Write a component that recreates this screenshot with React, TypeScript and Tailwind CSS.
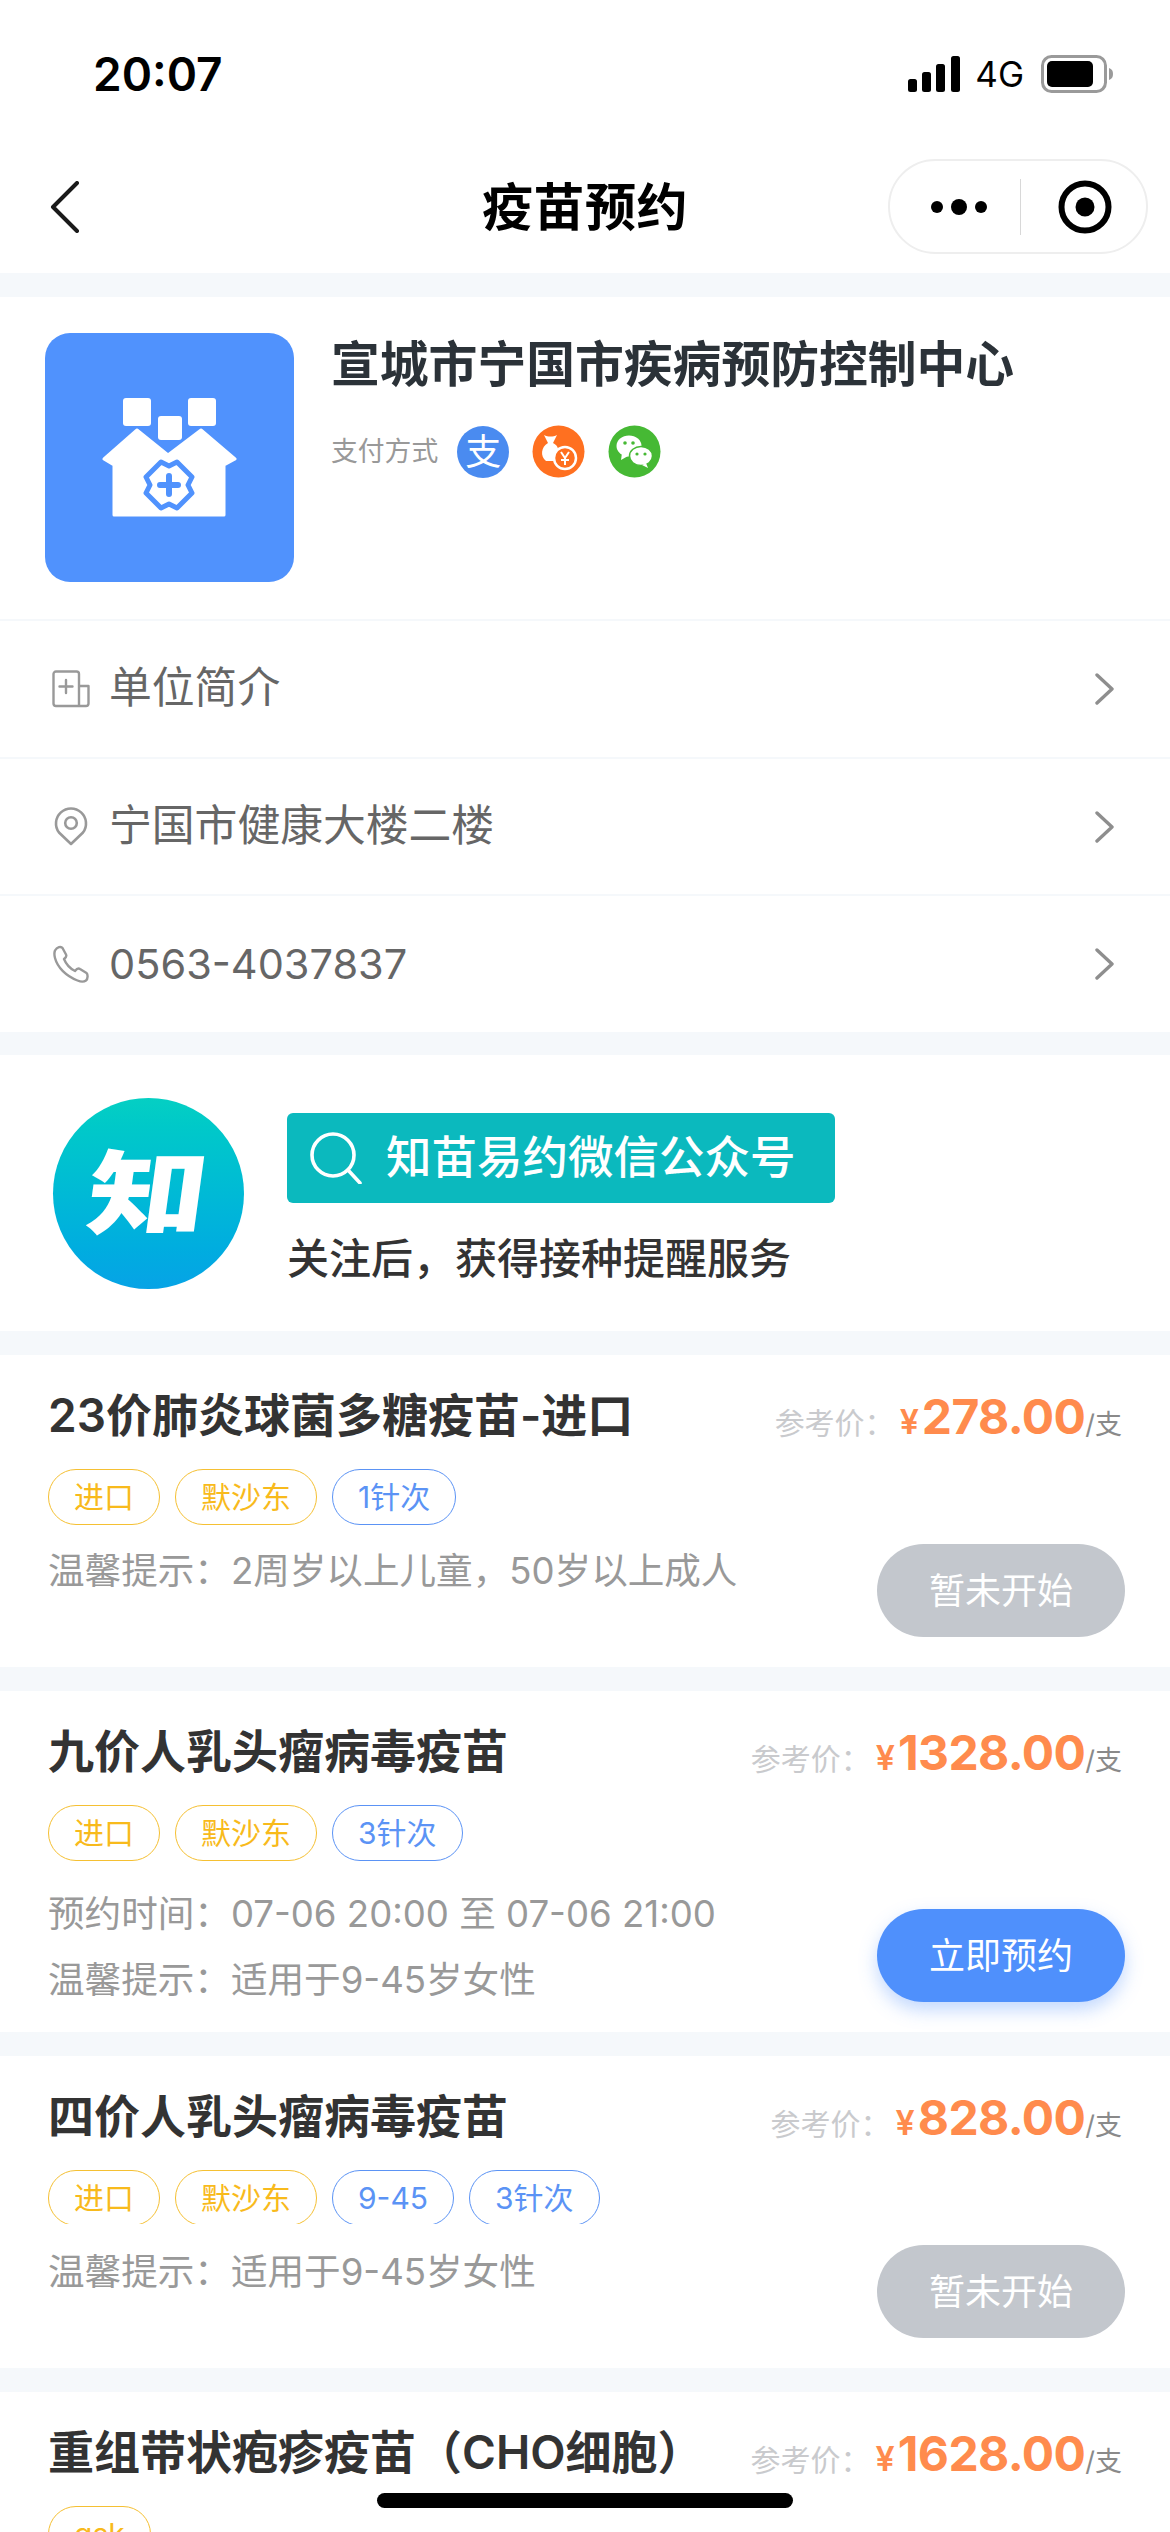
import React from "react";

const font = "font-['Inter','Noto_Sans_CJK_SC',sans-serif]";

function Chevron() {
  return (
    <svg width="22" height="32" viewBox="0 0 22 32" fill="none" className="shrink-0">
      <path d="M3 2l15 14L3 30" stroke="#8e8e8e" strokeWidth="3.4" strokeLinecap="round" strokeLinejoin="round" />
    </svg>
  );
}

function Row({ icon, children }: { icon: React.ReactNode; children: React.ReactNode }) {
  return (
    <div className="flex h-[137.7px] items-center border-t-2 border-[#f5f8fb] pl-[52px] pr-[54px]">
      <div className="flex w-[57px] shrink-0 items-center">{icon}</div>
      <div className="flex-1 text-[42.8px] leading-none text-[#666666]">{children}</div>
      <Chevron />
    </div>
  );
}

function Tag({ children, blue }: { children: React.ReactNode; blue?: boolean }) {
  return (
    <div
      className={`flex h-[56px] shrink-0 items-center rounded-[28px] border px-[25px] text-[30px] leading-none ${
        blue ? "border-[#5b93f5] text-[#5b93f5]" : "border-[#f5c033] text-[#f8ba1c]"
      }`}
    >
      {children}
    </div>
  );
}

function Price({ value }: { value: string }) {
  return (
    <div className="flex items-baseline">
      <span className="text-[30px] leading-none text-[#c9cacd]">参考价：</span>
      <span className="ml-[5px] text-[34px] font-semibold leading-none text-[#ff8b4d]">¥</span>
      <span className="ml-[3px] text-[48px] font-bold leading-none tracking-[-0.6px] text-[#ff8b4d]">{value}</span>
      <span className="text-[27px] leading-none text-[#8a8a8a]">/支</span>
    </div>
  );
}

function Button({ active }: { active?: boolean }) {
  return (
    <div
      className={`flex h-[93px] w-[248px] shrink-0 items-center justify-center rounded-[47px] text-[36px] leading-none text-white ${
        active ? "bg-[#4f90fc] shadow-[0_8px_18px_rgba(79,144,252,0.35)]" : "bg-[#c3c7cd]"
      }`}
    >
      {active ? "立即预约" : "暂未开始"}
    </div>
  );
}

function Card({
  title,
  price,
  tags,
  lines,
  active,
  clip,
  height,
}: {
  title: string;
  price: string;
  tags: { t: string; blue?: boolean }[];
  lines: string[];
  active?: boolean;
  clip?: boolean;
  height: string;
}) {
  return (
    <div className={`flex shrink-0 flex-col bg-white pl-[48px] pr-[45px] ${height}`}>
      <div className="flex h-[114px] shrink-0 items-end justify-between pb-[28px] pr-[3px]">
        <div className="text-[46px] font-semibold leading-[52px] text-[#333333]">{title}</div>
        <Price value={price} />
      </div>
      <div className="flex flex-1 items-start justify-between">
        <div className="flex flex-col">
          <div className={`flex gap-[15px] ${clip ? "h-[54px] overflow-hidden" : ""}`}>
            {tags.map((x) => (
              <Tag key={x.t} blue={x.blue}>
                {x.t}
              </Tag>
            ))}
          </div>
          <div className={`flex flex-col gap-[26px] ${active ? "mt-[33px]" : clip ? "mt-[28px]" : "mt-[26px]"}`}>
            {lines.map((l) => (
              <div key={l} className="text-[36.6px] leading-[40px] text-[#999999]">
                {l}
              </div>
            ))}
          </div>
        </div>
        <div className="self-end pb-[30px]">
          <Button active={active} />
        </div>
      </div>
    </div>
  );
}

export default function App() {
  return (
    <div className={`relative flex h-[2532px] w-[1170px] flex-col overflow-hidden bg-[#f5f8fb] ${font}`}>
      {/* status bar */}
      <div className="flex h-[148px] shrink-0 items-start justify-between bg-white pl-[93px] pr-[57px] pt-[49px]">
        <div className="text-[46px] font-semibold leading-[50px] text-black">20:07</div>
        <div className="flex items-center gap-[15px] pt-[6px]">
          <svg width="52" height="36" viewBox="0 0 52 36">
            <rect x="0" y="23" width="9" height="13" rx="2.5" fill="#000" />
            <rect x="14" y="16" width="9" height="20" rx="2.5" fill="#000" />
            <rect x="28" y="8" width="9" height="28" rx="2.5" fill="#000" />
            <rect x="43" y="0" width="9" height="36" rx="2.5" fill="#000" />
          </svg>
          <div className="text-[35px] leading-none text-black">4G</div>
          <svg width="72" height="38" viewBox="0 0 72 38" className="ml-[2px]">
            <rect x="1.5" y="1.5" width="63" height="35" rx="9" fill="none" stroke="#9a9a9a" strokeWidth="3" />
            <rect x="6" y="6" width="46" height="26" rx="5" fill="#000" />
            <path d="M68 13c3 1 4 3 4 6s-1 5-4 6z" fill="#9a9a9a" />
          </svg>
        </div>
      </div>

      {/* nav bar */}
      <div className="relative flex h-[125px] shrink-0 items-start justify-center bg-white">
        <svg width="30" height="52" viewBox="0 0 30 52" className="absolute left-[50px] top-[33px]">
          <path d="M27 2L3 26l24 24" fill="none" stroke="#1a1a1a" strokeWidth="4" strokeLinecap="round" strokeLinejoin="round" />
        </svg>
        <div className="mt-[28px] text-[51px] font-bold leading-[64px] tracking-[0.5px] text-black">疫苗预约</div>
        <div className="absolute right-[22px] top-[11px] flex h-[95px] w-[260px] items-center rounded-[48px] border-2 border-[#eeeeee] bg-white">
          <svg width="60" height="20" viewBox="0 0 60 20" className="ml-[39px]">
            <circle cx="8" cy="10" r="6" fill="#000" />
            <circle cx="30" cy="10" r="8" fill="#000" />
            <circle cx="52" cy="10" r="6" fill="#000" />
          </svg>
          <div className="ml-[31px] h-[56px] w-px bg-[#d8d8d8]" />
          <svg width="54" height="54" viewBox="0 0 54 54" className="ml-[37px]">
            <circle cx="27" cy="27" r="23.5" fill="none" stroke="#000" strokeWidth="6" />
            <circle cx="27" cy="27" r="9.5" fill="#000" />
          </svg>
        </div>
      </div>

      {/* organisation */}
      <div className="mt-[24px] flex h-[322px] shrink-0 items-start bg-white pl-[45px] pt-[36px]">
        <div className="h-[249px] w-[249px] shrink-0 rounded-[25px] bg-[#5092fd]">
          <svg width="249" height="249" viewBox="0 0 249 249">
            <rect x="78" y="65" width="28" height="28" rx="3" fill="#fff" />
            <rect x="143" y="65" width="28" height="28" rx="3" fill="#fff" />
            <rect x="113" y="83" width="24" height="24" rx="3" fill="#fff" />
            <path
              d="M92 97L123 122L156 97L190 126L179 132V182H69V132L59 126Z"
              fill="#fff"
              stroke="#fff"
              strokeWidth="3"
              strokeLinejoin="round"
            />
            <path
              d="M116 129L124 133L132 129L147 144L143 152L147 160L132 175L124 171L116 175L101 160L105 152L101 144Z"
              fill="#fff"
              stroke="#5092fd"
              strokeWidth="5"
              strokeLinejoin="round"
            />
            <path d="M124 143v18M115 152h18" stroke="#5092fd" strokeWidth="6" strokeLinecap="round" />
          </svg>
        </div>
        <div className="ml-[37px] flex flex-col">
          <div className="mt-[4px] text-[48.8px] font-semibold leading-[56px] text-[#2b3238]">宣城市宁国市疾病预防控制中心</div>
          <div className="mt-[32px] flex items-center">
            <span className="text-[26.8px] leading-none text-[#999999]">支付方式</span>
            <div className="ml-[19px] flex h-[52px] w-[52px] items-center justify-center rounded-full bg-[#4a8bf0] text-[36px] leading-none text-white">
              支
            </div>
            <svg width="53" height="53" viewBox="0 0 53 53" className="ml-[23px]">
              <circle cx="26.5" cy="26.5" r="26" fill="#ff7020" />
              <path d="M12 10c4 2 9 2 13 0l-4 8c6 3 6 8 4 13l-2 5H14c-6-5-5-14 2-18z" fill="#fff" />
              <circle cx="33" cy="33" r="11" fill="#ff7020" stroke="#fff" strokeWidth="2.5" />
              <path d="M29 27l4 6 4-6M33 33v7M29 35h8" stroke="#fff" strokeWidth="2" fill="none" />
            </svg>
            <svg width="53" height="53" viewBox="0 0 53 53" className="ml-[23px]">
              <circle cx="26.5" cy="26.5" r="26" fill="#46b934" />
              <ellipse cx="21" cy="21" rx="12.5" ry="10.5" fill="#fff" />
              <path d="M14 28l-1 7 7-4z" fill="#fff" />
              <ellipse cx="33" cy="31" rx="11.5" ry="9.5" fill="#fff" stroke="#46b934" strokeWidth="1.5" />
              <path d="M38 38l2 5-6-3z" fill="#fff" />
              <circle cx="17" cy="18" r="1.8" fill="#46b934" />
              <circle cx="25" cy="18" r="1.8" fill="#46b934" />
              <circle cx="29" cy="29" r="1.6" fill="#46b934" />
              <circle cx="37" cy="29" r="1.6" fill="#46b934" />
            </svg>
          </div>
        </div>
      </div>

      {/* info rows */}
      <div className="flex shrink-0 flex-col bg-white">
        <Row
          icon={
            <svg width="38" height="38" viewBox="0 0 38 38" fill="none" stroke="#999" strokeWidth="2.4" strokeLinejoin="round">
              <path d="M27 36V4a2.5 2.5 0 0 0-2.5-2.5H4A2.5 2.5 0 0 0 1.5 4v29.5A2.5 2.5 0 0 0 4 36h30a2.5 2.5 0 0 0 2.5-2.5V16H27" />
              <path d="M14 10v13M7.5 16.500h13" strokeLinecap="round" />
            </svg>
          }
        >
          单位简介
        </Row>
        <Row
          icon={
            <svg width="38" height="40" viewBox="0 0 38 40" fill="none" stroke="#999" strokeWidth="2.6">
              <path d="M19 37L7 25.500A15 15 0 1 1 31 25.500z" strokeLinejoin="round" />
              <circle cx="19" cy="16" r="5.800" />
            </svg>
          }
        >
          宁国市健康大楼二楼
        </Row>
        <Row
          icon={
            <svg width="38" height="38" viewBox="0 0 38 38" fill="none" stroke="#999" strokeWidth="2.4" strokeLinejoin="round">
              <path d="M3 5.500C5 2 9 1 10.500 3L14 9.500c.8 1.500 0 3-2 4.500 2 5 6 9.500 11 12 1.500-2 3.500-3 5-2l6.500 4c1.500 1.200 1.500 6-.5 7.500-2 1.500-5 1.500-8.500 0C14 31 5.500 22.500 3 13c-.8-3-.8-5.500 0-7.500z" />
            </svg>
          }
        >
          <span className="text-[41.5px]">0563-4037837</span>
        </Row>
      </div>

      {/* official account banner */}
      <div className="mt-[23px] flex h-[276px] shrink-0 items-start bg-white pl-[53px] pt-[43px]">
        <div className="flex h-[191px] w-[191px] shrink-0 items-center justify-center overflow-hidden rounded-full bg-gradient-to-b from-[#05cfc3] to-[#07a3e6]">
          <span className="-skew-x-6 scale-x-[1.3] text-[92px] font-black leading-none text-white">知</span>
        </div>
        <div className="ml-[43px] flex flex-col">
          <div className="mt-[15px] flex h-[90px] w-[548px] items-center rounded-[6px] bg-[#0bb9be] pl-[23px]">
            <svg width="52" height="52" viewBox="0 0 52 52" fill="none" stroke="#fff" strokeWidth="3.600">
              <circle cx="23" cy="23" r="21" />
              <path d="M38 38l12 13" strokeLinecap="round" />
            </svg>
            <span className="ml-[24px] text-[45.5px] font-medium leading-none text-white">知苗易约微信公众号</span>
          </div>
          <div className="mt-[31px] text-[42px] font-medium leading-[50px] text-[#333333]">关注后，获得接种提醒服务</div>
        </div>
      </div>

      {/* vaccine list */}
      <div className="mt-[24px] flex flex-col gap-[24px]">
        <Card
          height="h-[312px]"
          title="23价肺炎球菌多糖疫苗-进口"
          price="278.00"
          tags={[{ t: "进口" }, { t: "默沙东" }, { t: "1针次", blue: true }]}
          lines={["温馨提示：2周岁以上儿童，50岁以上成人"]}
        />
        <Card
          height="h-[341px]"
          active
          title="九价人乳头瘤病毒疫苗"
          price="1328.00"
          tags={[{ t: "进口" }, { t: "默沙东" }, { t: "3针次", blue: true }]}
          lines={["预约时间：07-06 20:00 至 07-06 21:00", "温馨提示：适用于9-45岁女性"]}
        />
        <Card
          height="h-[312px]"
          clip
          title="四价人乳头瘤病毒疫苗"
          price="828.00"
          tags={[{ t: "进口" }, { t: "默沙东" }, { t: "9-45", blue: true }, { t: "3针次", blue: true }]}
          lines={["温馨提示：适用于9-45岁女性"]}
        />
        <Card
          height="h-[312px]"
          title="重组带状疱疹疫苗（CHO细胞）"
          price="1628.00"
          tags={[{ t: "gsk" }]}
          lines={[]}
        />
      </div>

      {/* home indicator */}
      <div className="absolute bottom-[24px] left-[377px] h-[15px] w-[416px] rounded-full bg-black" />
    </div>
  );
}
